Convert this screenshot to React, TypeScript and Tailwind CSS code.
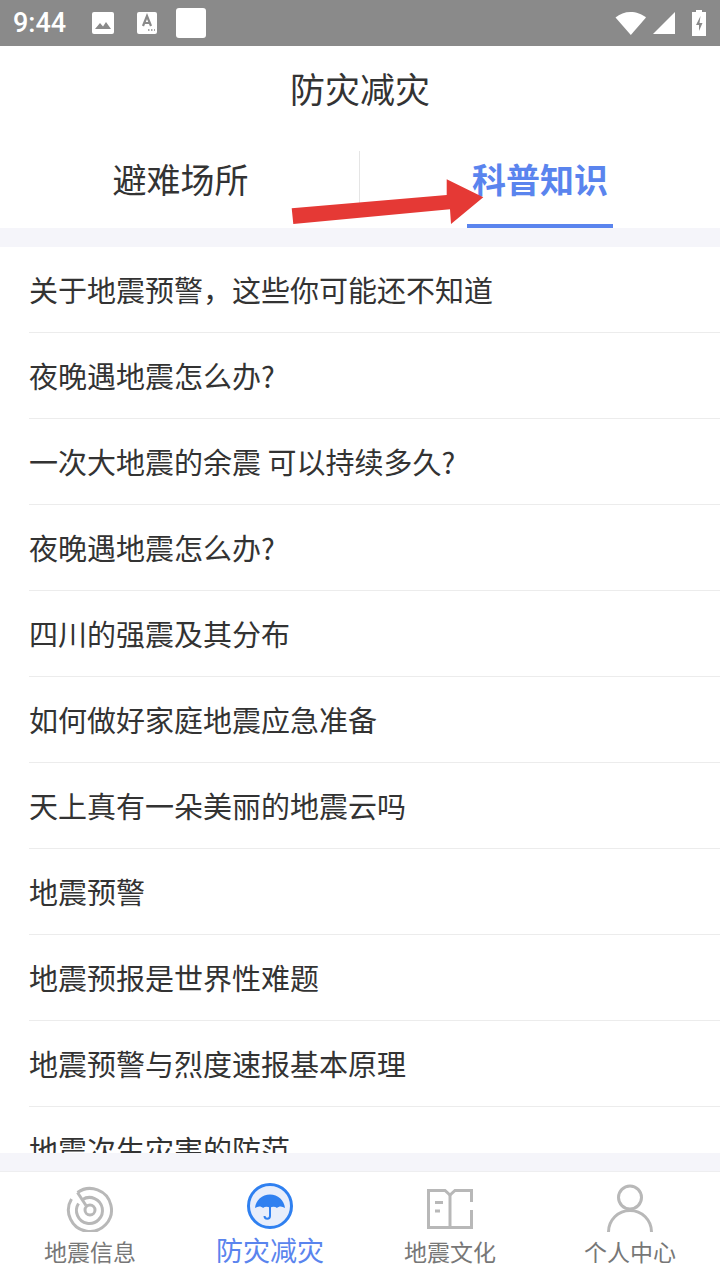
const articles = [
  '关于地震预警，这些你可能还不知道',
  '夜晚遇地震怎么办?',
  '一次大地震的余震 可以持续多久?',
  '夜晚遇地震怎么办?',
  '四川的强震及其分布',
  '如何做好家庭地震应急准备',
  '天上真有一朵美丽的地震云吗',
  '地震预警',
  '地震预报是世界性难题',
  '地震预警与烈度速报基本原理',
  '地震次生灾害的防范',
];

function StatusBar() {
  return (
    <div className="flex h-[46px] shrink-0 items-center bg-[#8a8a8a] pl-[13px] pr-[13px] text-white">
      <span className="w-[78px] font-['Roboto',sans-serif] text-[27px] font-medium leading-none">9:44</span>
      <svg className="mr-[22px] h-[24px] w-[24px]" viewBox="0 0 24 24">
        <rect x="1" y="1" width="22" height="22" rx="2" fill="#fff" />
        <path d="M4 18l5-6 3 3.5 3-4.5 5 7z" fill="#8a8a8a" />
      </svg>
      <svg className="mr-[19px] h-[24px] w-[20px]" viewBox="0 0 20 24">
        <rect x="0" y="1" width="20" height="22" rx="2" fill="#fff" />
        <path d="M6 15L10 5l4 10M7.500 12h5" fill="none" stroke="#8a8a8a" strokeWidth="2.200" />
        <path d="M11 19h1.500M14 19h1.500M17 19h1" stroke="#8a8a8a" strokeWidth="1.500" />
      </svg>
      <div className="h-[30px] w-[30px] rounded-[3px] bg-white" />
      <div className="flex-1" />
      <svg className="mr-[5px] h-[24px] w-[32px]" viewBox="0 0 32 24">
        <path d="M0.500 6.500C4.500 3 10 1 15.500 1S27 3 31 6.500L15.800 24z" fill="#fff" />
      </svg>
      <svg className="mr-[15px] h-[24px] w-[24px]" viewBox="0 0 24 24">
        <path d="M23 1v22H1z" fill="#fff" />
      </svg>
      <svg className="h-[26px] w-[16px]" viewBox="0 0 16 26">
        <path fillRule="evenodd" d="M5 0h6v2h4v24H1V2h4zM9.500 6L5 15h3v6l3.500-8H8.500z" fill="#fff" />
      </svg>
    </div>
  );
}

function Tabs() {
  return (
    <div className="relative flex h-[98px] shrink-0 bg-white">
      <div className="flex w-[359px] items-center justify-center pb-[2px] pl-[2px] text-[34px] text-[#333]">避难场所</div>
      <div className="mt-[21px] h-[62px] w-px bg-[#e5e5e5]" />
      <div className="flex flex-1 items-center justify-center">
        <div className="flex h-full w-[146px] items-center justify-center border-b-[4px] border-[#5a84ee] pt-[2px] text-[34px] font-bold text-[#5a84ee]">
          科普知识
        </div>
      </div>
      {/* red annotation arrow on top of the tabs */}
      <svg className="absolute left-[288px] top-[44px] h-[52px] w-[200px]" viewBox="0 0 200 52">
        <path d="M3.700 34.300L158.700 21 158.700 5.300 195.300 23.300 163 50 162 35.300 5.300 50z" fill="#e53935" />
      </svg>
    </div>
  );
}

function NavItem({ label, active, children }: { label: string; active?: boolean; children: React.ReactNode }) {
  return (
    <div className="flex flex-1 flex-col items-center pt-[10px]">
      <div className="h-[50px] w-[50px]">{children}</div>
      <span className={active ? 'text-[27px] leading-[36px] text-[#5a84ee]' : 'mt-[3px] text-[23px] leading-[32px] text-[#777]'}>
        {label}
      </span>
    </div>
  );
}

function BottomNav() {
  return (
    <div className="flex h-[108px] shrink-0 bg-white">
      <NavItem label="地震信息">
        <svg viewBox="0 0 50 50" fill="none" stroke="#b8b8b8" strokeWidth="3">
          <path d="M12.500 10.500A21.500 21.500 0 1 1 6.500 17" />
          <path d="M12.500 10.500L21 23.500" />
          <path d="M17.500 17.500A13 13 0 1 1 13.500 21.500" />
          <circle cx="25" cy="28" r="5" />
        </svg>
      </NavItem>
      <NavItem label="防灾减灾" active>
        <svg viewBox="0 0 50 50" fill="none">
          <circle cx="25" cy="24" r="21.500" fill="#e8eefb" stroke="#2f80f0" strokeWidth="3" />
          <path d="M25 10.500v2C33 12.500 39 18 40 26c-3-2-6-2-8 0-2-1.800-5-1.800-7 0-2-1.800-5-1.800-7 0-2-2-5-2-8 0C11 18 17 12.500 25 12.500z" fill="#2f80f0" />
          <path d="M25 25v9c0 3.500-5.500 3.500-5.500 0" stroke="#2f80f0" strokeWidth="2" />
        </svg>
      </NavItem>
      <NavItem label="地震文化">
        <svg viewBox="0 0 50 50" fill="none" stroke="#b8b8b8" strokeWidth="3">
          <path d="M46.500 20V8.500H30L25 13 20 8.500H3.500V45.500H46.500V28" />
          <path d="M25 13V45.500" />
          <path d="M10 20.500h8M10 29h5" />
        </svg>
      </NavItem>
      <NavItem label="个人中心">
        <svg viewBox="0 0 50 50" fill="none" stroke="#b8b8b8" strokeWidth="3">
          <circle cx="25" cy="15.500" r="11.500" />
          <path d="M3.500 50A21.500 21.500 0 0 1 46.500 50" />
        </svg>
      </NavItem>
    </div>
  );
}

export default function App() {
  return (
    <div className="flex h-[1280px] w-[720px] flex-col overflow-hidden bg-white font-['Noto_Sans_CJK_SC',sans-serif]">
      <StatusBar />
      <div className="flex h-[84px] shrink-0 items-center justify-center text-[35px] text-[#333]">防灾减灾</div>
      <Tabs />
      <div className="h-[19px] shrink-0 bg-[#f5f5fa]" />

      <div className="min-h-0 flex-1 overflow-hidden">
        {articles.map((title, i) => (
          <div key={i} className="ml-[29px] flex h-[86px] items-center border-b border-[#ececec] text-[29px] text-[#333]">
            {title}
          </div>
        ))}
      </div>

      <div className="h-[19px] shrink-0 border-b border-[#eeeef0] bg-[#f5f5fa]" />
      <BottomNav />
    </div>
  );
}
